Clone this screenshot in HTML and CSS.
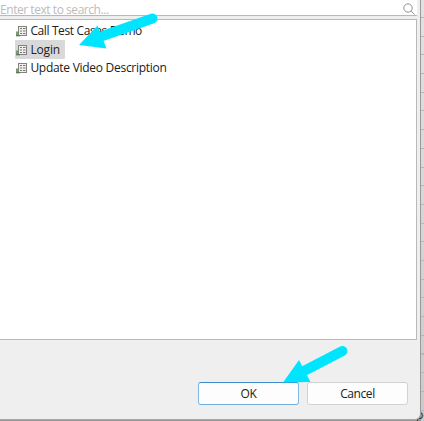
FILE: index.html
```
<!DOCTYPE html>
<html lang="en">
<head>
<meta charset="utf-8">
<title>Select test case</title>
<link rel="stylesheet" href="styles.css">
</head>
<body>
<svg class="defs" width="0" height="0" aria-hidden="true">
  <symbol id="case" viewBox="0 0 11 12">
    <rect x="2.5" y="1.5" width="8" height="9" fill="#f0efed" stroke="#85817e"/>
    <path d="M4 3.5h2M7 3.5h2.5M4 6h2M7 6h2.5M4 8.5h2M7 8.5h2.5" stroke="#77777a" stroke-width="1"/>
    <path d="M0 6.5h2v4.5H0z" fill="#6fa364"/>
    <path d="M0 10.8h4" stroke="#53704d"/>
  </symbol>
</svg>
<div class="dialog">
  <div class="search">
    <span class="placeholder">Enter text to search...</span>
    <svg class="magnifier" viewBox="0 0 12 12"><circle cx="5" cy="5" r="4.2"/><path d="M8 8l3.5 3.5"/></svg>
  </div>
  <div class="list">
    <div class="item"><svg class="icon"><use href="#case"/></svg><span class="demo">Call Test Cases Demo</span></div>
    <div class="item selected"><svg class="icon"><use href="#case"/></svg><span class="login">Login</span></div>
    <div class="item"><svg class="icon"><use href="#case"/></svg><span class="update">Update Video Description</span></div>
  </div>
  <div class="actions">
    <div class="button primary">OK</div>
    <div class="button">Cancel</div>
  </div>
</div>
<div class="behind"><span class="clip">pe</span></div>
<svg class="arrows" viewBox="0 0 424 421">
  <path d="M152.5 18.5L101 36.5M342.5 351L303 371.5" stroke="#00e5ff" stroke-width="10" stroke-linecap="round"/>
  <path d="M79 45L97.5 25.5L106.5 48.5zM283 382.5L299 360L310.5 382z" fill="#00e5ff"/>
</svg>
</body>
</html>
```
FILE: styles.css
```
* { box-sizing: border-box; }
body {
  margin: 0;
  width: 424px;
  height: 421px;
  overflow: hidden;
  display: grid;
  grid-template-columns: 421px 3px;
  background: #999;
  font: 12px/16px "Open Sans", "Noto Sans", sans-serif;
  color: #202020;
}
.defs { position: absolute; }
.dialog {
  position: relative;
  z-index: 1;
  height: 420px;
  display: flex;
  flex-direction: column;
  background: #efefef;
  border-right: 1px solid #999;
  border-bottom: 1px solid #a5a5a5;
  border-bottom-right-radius: 6px;
}
.search {
  width: 417px;
  height: 16px;
  display: flex;
  justify-content: space-between;
  background: #fff;
  border-bottom: 1px solid #b9b9bd;
}
.placeholder {
  color: #bcbcbc;
  padding-top: 2px;
  white-space: nowrap;
  letter-spacing: -0.45px;
}
.magnifier {
  width: 12px;
  height: 12px;
  margin: 3px 2px 0 0;
  fill: none;
  stroke: #92929a;
}
.list {
  width: 417px;
  height: 321px;
  margin-top: 3px;
  padding: 1.6px 0 0 15px;
  background: #fff;
  border: solid #b9b9bd;
  border-width: 1px 1px 1px 0;
}
.item {
  width: max-content;
  height: 18.7px;
  display: flex;
  align-items: center;
  gap: 3px;
  padding: 0 5px 0 1.4px;
  white-space: nowrap;
}
.demo { letter-spacing: -0.38px; }
.login { letter-spacing: -0.15px; }
.update { letter-spacing: -0.28px; }
.selected { width: 50px; background: #d9d9d9; border-radius: 1px; }
.icon { width: 11px; height: 12px; flex: none; }
.actions {
  display: flex;
  gap: 8px;
  margin: 42px 0 0 198px;
}
.button {
  width: 101px;
  height: 23px;
  background: #fdfdfd;
  border: 1px solid #d2d2d2;
  border-radius: 3px;
  text-align: center;
  line-height: 22px;
  letter-spacing: -0.4px;
}
.primary { border-color: #3c8ccc #80b9e5 #70aee0; }
.behind {
  height: 421px;
  padding-top: 407px;
  background: repeating-linear-gradient(transparent 0 16.9px, #b7b7b7 16.9px 17.9px, transparent 17.9px 18.7px), linear-gradient(#e2e2e2, #cacaca);
}
.clip { display: block; margin-left: -5px; line-height: 16px; }
.arrows { position: absolute; z-index: 2; inset: 0; width: 424px; height: 421px; fill: none; }
```
